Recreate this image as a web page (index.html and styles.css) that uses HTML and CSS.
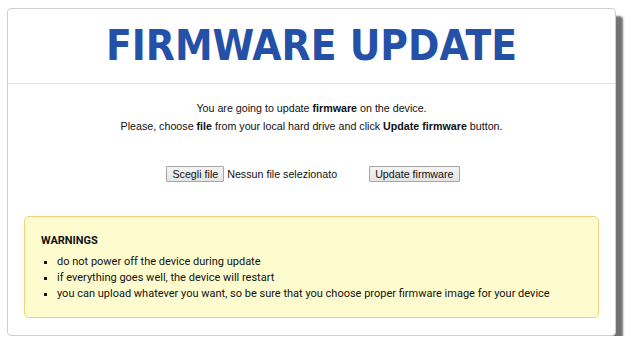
FILE: index.html
```html
<!DOCTYPE html>
<html lang="en">
<head>
  <meta charset="UTF-8">
  <title>Firmware Update</title>
  <link rel="stylesheet" href="styles.css">
</head>
<body>
  <div class="update-card">
    <div class="update-header">
      <h1 class="update-title">FIRMWARE UPDATE</h1>
    </div>

    <div class="update-intro">
      <p>You are going to update <b>firmware</b> on the device.</p>
      <p>Please, choose <b>file</b> from your local hard drive and click <b>Update firmware</b> button.</p>
    </div>

    <form class="update-form" onsubmit="return false;">
      <div class="file-picker">
        <button type="button" class="form-button">Scegli file</button>
        <span class="file-name">Nessun file selezionato</span>
      </div>
      <button type="submit" class="form-button">Update firmware</button>
    </form>

    <div class="warning-box">
      <h3>WARNINGS</h3>
      <ul>
        <li>do not power off the device during update</li>
        <li>if everything goes well, the device will restart</li>
        <li>you can upload whatever you want, so be sure that you choose proper firmware image for your device</li>
      </ul>
    </div>
  </div>
</body>
</html>
```

FILE: styles.css
```css
:root {
  --title-blue: #2550a8;
  --card-border: #cfcfcf;
  --warn-bg: #fefccf;
  --warn-border: #efd27a;
  --text: #111;
}

body {
  margin: 0;
  background: #fff;
  font-family: 'Liberation Sans', Arial, sans-serif;
  color: var(--text);
}

.update-card {
  width: 607px;
  margin: 8px 0 0 7px;
  border: 1px solid var(--card-border);
  border-radius: 4px;
  background: #fff;
  box-shadow: 7px 8px 2px rgba(0, 0, 0, 0.55);
  padding-bottom: 17px;
}

.update-header {
  height: 74px;
  border-bottom: 1px solid #e2e2e2;
  text-align: center;
}

.update-title {
  margin: 0;
  font-family: 'DejaVu Sans', sans-serif;
  font-stretch: condensed;
  font-size: 42px;
  font-weight: 700;
  line-height: 74px;
  color: var(--title-blue);
}

.update-intro {
  padding-top: 15px;
  text-align: center;
  font-size: 10.7px;
  line-height: 18px;
}

.update-intro p {
  margin: 0;
}

.update-form {
  display: flex;
  justify-content: center;
  align-items: center;
  gap: 32px;
  margin: 31px 0 0 3px;
  font-size: 10.7px;
}

.file-picker {
  display: flex;
  align-items: center;
  gap: 3px;
}

.form-button {
  font-family: 'Liberation Sans', Arial, sans-serif;
  font-size: 10.7px;
  height: 16px;
  line-height: 14px;
  padding: 0 5px;
  color: #111;
  background: linear-gradient(#f4f4f4, #e4e4e4);
  border: 1px solid #a6a6a6;
  border-radius: 1px;
}

.warning-box {
  margin: 34px 16px 0 16px;
  height: 102px;
  box-sizing: border-box;
  padding: 17px 16px 0;
  background: var(--warn-bg);
  border: 1px solid var(--warn-border);
  border-radius: 5px;
  font-family: Roboto, 'Liberation Sans', sans-serif;
  font-size: 11px;
}

.warning-box h3 {
  margin: 0 0 6px 0;
  font-size: 11px;
  line-height: 14px;
  font-weight: 700;
}

.warning-box ul {
  margin: 0;
  padding-left: 16px;
  list-style: square;
}

.warning-box li {
  line-height: 16px;
}
```
